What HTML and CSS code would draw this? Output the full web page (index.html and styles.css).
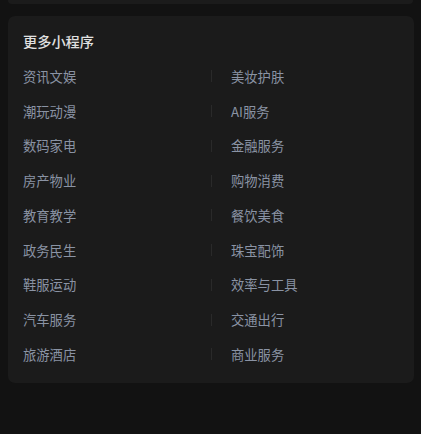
FILE: index.html
```html
<!DOCTYPE html>
<html lang="zh-CN">
<head>
<meta charset="utf-8">
<link rel="stylesheet" href="styles.css">
</head>
<body>
<div class="prev-card"></div>
<section class="card">
  <h2 class="title">更多小程序</h2>
  <div class="grid">
    <div class="cell left">资讯文娱</div><div class="cell right">美妆护肤</div>
    <div class="cell left">潮玩动漫</div><div class="cell right">AI服务</div>
    <div class="cell left">数码家电</div><div class="cell right">金融服务</div>
    <div class="cell left">房产物业</div><div class="cell right">购物消费</div>
    <div class="cell left">教育教学</div><div class="cell right">餐饮美食</div>
    <div class="cell left">政务民生</div><div class="cell right">珠宝配饰</div>
    <div class="cell left">鞋服运动</div><div class="cell right">效率与工具</div>
    <div class="cell left">汽车服务</div><div class="cell right">交通出行</div>
    <div class="cell left">旅游酒店</div><div class="cell right">商业服务</div>
  </div>
</section>
</body>
</html>
```
FILE: styles.css
```css
html, body {
  margin: 0;
  padding: 0;
  background: #121212;
  font-family: "Noto Sans CJK SC", "Noto Sans", sans-serif;
}
body {
  width: 421px;
  height: 434px;
  overflow: hidden;
}
.prev-card {
  margin: 0 8px;
  height: 4px;
  background: #1b1b1b;
  border-radius: 0 0 7px 7px;
}
.card {
  margin: 12px 7px 0 8px;
  background: #1b1b1b;
  border-radius: 7px;
  padding: 15px 15px 11px 15px;
}
.title {
  margin: 0 0 8px 0;
  font-size: 14.2px;
  line-height: 20px;
  font-weight: 500;
  color: #e0e0e0;
}
.grid {
  display: grid;
  grid-template-columns: 188px 1fr;
  grid-auto-rows: 34.75px;
}
.cell {
  display: flex;
  align-items: center;
  font-size: 13.3px;
  color: #8a93a4;
  position: relative;
}
.right {
  padding-left: 20px;
}
.right::before {
  content: "";
  position: absolute;
  left: 0;
  top: 50%;
  width: 1px;
  height: 12px;
  margin-top: -6px;
  background: #2a2a2a;
}
```
